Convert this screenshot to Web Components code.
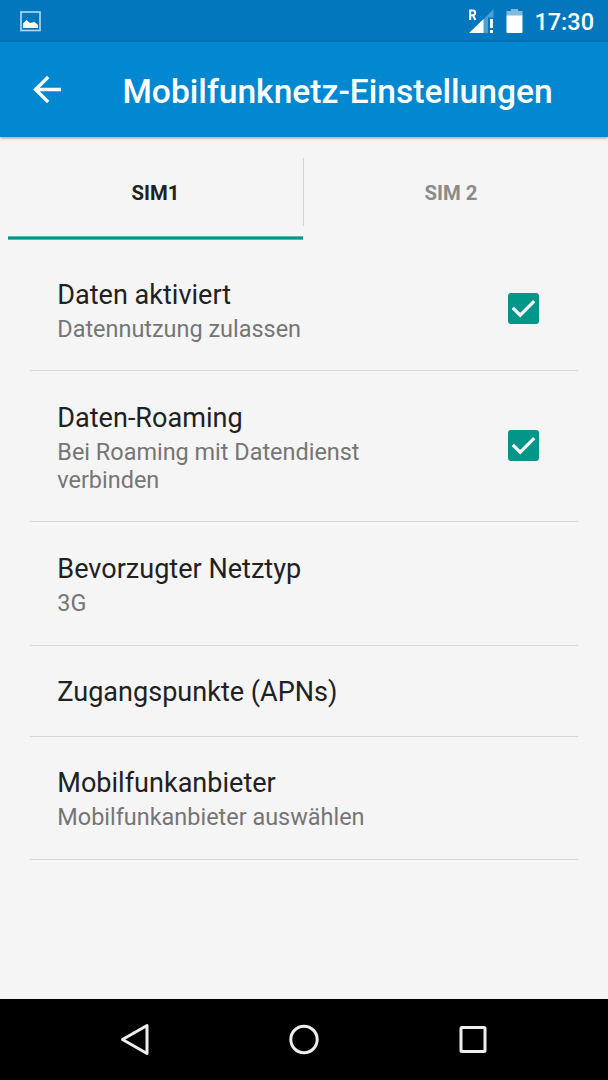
<!DOCTYPE html>
<html lang="de">
<head>
<meta charset="utf-8">
<title>Mobilfunknetz-Einstellungen</title>
<style>
  body {
    margin: 0;
    background: #f5f5f5;
    font-family: Roboto, sans-serif;
  }
</style>
</head>
<body>
<settings-screen>
  <status-bar slot="status" time="17:30"></status-bar>
  <app-toolbar slot="toolbar">Mobilfunknetz-Einstellungen</app-toolbar>
  <sim-tabs slot="tabs">
    <sim-tab selected>SIM1</sim-tab>
    <sim-tab>SIM 2</sim-tab>
  </sim-tabs>
  <preference-item>Daten aktiviert<span slot="summary">Datennutzung zulassen</span><check-box slot="widget"></check-box></preference-item>
  <preference-item>Daten-Roaming<span slot="summary">Bei Roaming mit Datendienst verbinden</span><check-box slot="widget"></check-box></preference-item>
  <preference-item>Bevorzugter Netztyp<span slot="summary">3G</span></preference-item>
  <preference-item>Zugangspunkte (APNs)</preference-item>
  <preference-item>Mobilfunkanbieter<span slot="summary">Mobilfunkanbieter auswählen</span></preference-item>
  <navigation-bar slot="navigation"></navigation-bar>
</settings-screen>

<script>
  'use strict';
  {
    class SettingsScreen extends HTMLElement {
      constructor() {
        super();
        this.attachShadow({mode: 'open'});
        this.shadowRoot.innerHTML = `
          <style>
            :host {
              display: flex;
              flex-direction: column;
              width: 608px;
              height: 1080px;
              overflow: hidden;
            }
            main {
              flex: 1;
              padding: 8px 30px 0;
            }
          </style>
          <slot name="status"></slot>
          <slot name="toolbar"></slot>
          <slot name="tabs"></slot>
          <main><slot></slot></main>
          <slot name="navigation"></slot>
        `;
      }
    }
    customElements.define('settings-screen', SettingsScreen);

    class StatusBar extends HTMLElement {
      constructor() {
        super();
        this.attachShadow({mode: 'open'});
        this.shadowRoot.innerHTML = `
          <style>
            :host {
              display: flex;
              box-sizing: border-box;
              height: 42px;
              padding: 0 14px 0 20px;
              background: #0277bd;
              color: #fff;
            }
            svg {
              display: block;
              flex: none;
            }
            .signal {
              margin-left: auto;
            }
            .battery {
              margin: 0 11px 0 11.500px;
            }
            time {
              font-size: 23.5px;
              font-weight: 500;
              line-height: 44px;
            }
          </style>
          <svg width="22" height="42" viewBox="0 0 22 42">
            <rect x="1" y="12" width="19" height="18.5" fill="none" stroke="#b9dbef" stroke-width="1.6"/>
            <path d="M3 28v-4.500l3.500-3.500 3.500 3 4.500-1 3.500 3v3z" fill="#fff"/>
          </svg>
          <svg class="signal" width="26" height="42" viewBox="0 0 26 42">
            <path d="M24.500 9v8.500H19V33h-5V20z" fill="#4da0d1"/>
            <path d="M0 33L14.500 19V33z" fill="#fff"/>
            <path d="M1.200 20V10.500h2.600a2.300 2.300 0 0 1 0 4.700H1.200m2.700 0L6.400 20" fill="none" stroke="#fff" stroke-width="2"/>
            <path d="M21 19h3v9h-3zM21 30h3v3h-3z" fill="#fff"/>
          </svg>
          <svg class="battery" width="17" height="42" viewBox="0 0 17 42">
            <path d="M5 9h7v2h4.500v5H.5v-5H5z" fill="#80bbde"/>
            <path d="M.5 15.500h16V32a1 1 0 0 1-1 1h-14a1 1 0 0 1-1-1z" fill="#fff"/>
          </svg>
          <time></time>
        `;
      }

      connectedCallback() {
        this.shadowRoot.querySelector('time').textContent = this.getAttribute('time');
      }
    }
    customElements.define('status-bar', StatusBar);

    class AppToolbar extends HTMLElement {
      constructor() {
        super();
        this.attachShadow({mode: 'open'});
        this.shadowRoot.innerHTML = `
          <style>
            :host {
              display: flex;
              box-sizing: border-box;
              height: 95px;
              padding-left: 33px;
              background: #0288d1;
              box-shadow: 0 1px 3px rgba(0, 0, 0, .4);
              color: #fff;
            }
            svg {
              flex: none;
              margin-right: 60.500px;
            }
            h1 {
              margin: 0;
              font-size: 33.6px;
              font-weight: 500;
              line-height: 100px;
              white-space: nowrap;
            }
          </style>
          <svg width="29" height="95" viewBox="0 0 29 95">
            <path d="M28 47.500H3M15.200 35L2.500 47.500 15.200 60" fill="none" stroke="#fff" stroke-width="3.300"/>
          </svg>
          <h1><slot></slot></h1>
        `;
      }
    }
    customElements.define('app-toolbar', AppToolbar);

    class SimTabs extends HTMLElement {
      constructor() {
        super();
        this.attachShadow({mode: 'open'});
        this.shadowRoot.innerHTML = `
          <style>
            :host {
              display: flex;
              height: 103px;
              padding: 0 10px 0 8px;
            }
          </style>
          <slot></slot>
        `;
      }
    }
    customElements.define('sim-tabs', SimTabs);

    class SimTab extends HTMLElement {
      constructor() {
        super();
        this.attachShadow({mode: 'open'});
        this.shadowRoot.innerHTML = `
          <style>
            :host {
              display: flex;
              flex: 1;
              flex-direction: column;
              justify-content: space-between;
              box-sizing: border-box;
              padding-top: 21px;
              color: #8b8b8b;
              font-size: 20.3px;
              font-weight: 700;
              line-height: 71px;
              text-align: center;
            }
            :host([selected]) {
              color: #212121;
            }
            .label {
              height: 68px;
            }
            :host(:not([selected])) .label {
              border-left: 1px solid #d6d6d6;
            }
            .indicator {
              height: 4px;
            }
            :host([selected]) .indicator {
              background: linear-gradient(#5ab9af 1px, #009688 1px, #009688 3px, #5ab9af 3px);
            }
          </style>
          <div class="label"><slot></slot></div>
          <div class="indicator"></div>
        `;
      }
    }
    customElements.define('sim-tab', SimTab);

    class PreferenceItem extends HTMLElement {
      constructor() {
        super();
        this.attachShadow({mode: 'open'});
        this.shadowRoot.innerHTML = `
          <style>
            :host {
              display: flex;
              align-items: center;
              justify-content: space-between;
              padding: 29px 39px 29.200px 27.300px;
              border-bottom: 1px solid #d9d9d9;
            }
            .text {
              max-width: 340px;
              padding-top: 1.500px;
              margin-bottom: -1.500px;
            }
            .title {
              color: #212121;
              font-size: 27.05px;
              line-height: 32px;
            }
            slot[name=summary]::slotted(*) {
              display: block;
              margin-top: 4px;
              color: #757575;
              font-size: 23.45px;
              line-height: 28px;
            }
            slot[name=widget]::slotted(*) {
              margin-top: -1px;
            }
          </style>
          <div class="text">
            <div class="title"><slot></slot></div>
            <slot name="summary"></slot>
          </div>
          <slot name="widget"></slot>
        `;
      }
    }
    customElements.define('preference-item', PreferenceItem);

    class CheckBox extends HTMLElement {
      constructor() {
        super();
        this.attachShadow({mode: 'open'});
        this.shadowRoot.innerHTML = `
          <style>
            :host {
              display: block;
              width: 31px;
              height: 31px;
            }
            svg {
              display: block;
            }
          </style>
          <svg width="31" height="31" viewBox="0 0 31 31">
            <rect width="31" height="31" rx="3" fill="#009688"/>
            <path d="M4.800 14.800L12.200 22.200 26.200 8.200" fill="none" stroke="#f5f5f5" stroke-width="3.300"/>
          </svg>
        `;
      }
    }
    customElements.define('check-box', CheckBox);

    class NavigationBar extends HTMLElement {
      constructor() {
        super();
        this.attachShadow({mode: 'open'});
        this.shadowRoot.innerHTML = `
          <style>
            :host {
              display: flex;
              align-items: center;
              justify-content: center;
              gap: 133px;
              height: 81px;
              background: #000;
            }
            svg {
              fill: none;
              stroke: #eee;
              stroke-width: 3;
              stroke-linejoin: round;
            }
          </style>
          <svg width="36" height="36" viewBox="0 0 36 36">
            <path d="M5.500 17.500L30 3.500v28z"/>
          </svg>
          <svg width="36" height="36" viewBox="0 0 36 36">
            <circle cx="18" cy="17.500" r="13.200"/>
          </svg>
          <svg width="36" height="36" viewBox="0 0 36 36">
            <rect x="6" y="5.500" width="24" height="24" rx="1"/>
          </svg>
        `;
      }
    }
    customElements.define('navigation-bar', NavigationBar);
  }
</script>
</body>
</html>
